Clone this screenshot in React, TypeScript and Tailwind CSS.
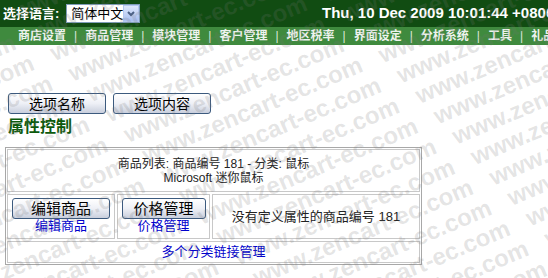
import React from "react";

const navItems = ["商店设置", "商品管理", "模块管理", "客户管理", "地区税率", "界面设定", "分析系统", "工具", "礼品券"];

// faint diagonal site watermark lying over the page
const Watermark = () => {
  const lines = Array.from({ length: 24 });
  return (
    <div className="pointer-events-none absolute inset-0 overflow-hidden" aria-hidden="true">
      <div className="absolute left-[-200px] top-[-180px] w-[1000px] rotate-[-23deg]">
        {lines.map((_, i) => (
          <div
            key={i}
            className="whitespace-nowrap text-[24px] leading-[26px] font-semibold text-[rgba(120,120,120,0.2)] font-['Liberation_Sans',sans-serif]"
            style={{ paddingLeft: (i * 9) % 270 }}
          >
            {"www.zencart-ec.com\u00a0\u00a0 ".repeat(4)}
          </div>
        ))}
      </div>
    </div>
  );
};

const GrayButton = ({ label, className }: { label: string; className: string }) => (
  <button
    className={`h-[21px] rounded-[3px] border border-[#3c5a7e] bg-gradient-to-b from-white via-[#eef0f6] to-[#c9cfdd] text-black leading-none ${className}`}
  >
    {label}
  </button>
);

export default function App() {
  return (
    <div className="relative w-[548px] h-[278px] overflow-hidden bg-white font-['Liberation_Sans','Noto_Sans_CJK_SC',sans-serif]">
      {/* header */}
      <div className="flex items-center h-[27px] bg-[#114c12] text-white whitespace-nowrap">
        <div className="flex items-center w-[322px] shrink-0 pl-[3px]">
          <span className="text-[13px] font-bold">选择语言:</span>
          <div className="ml-[7px] flex items-center h-[19px] w-[74px] bg-white border border-[#7f9db9]">
            <span className="flex-1 pl-[4px] text-[13px] text-black">简体中文</span>
            <span className="flex items-center justify-center w-[16px] h-[17px] bg-gradient-to-b from-[#dfe8fb] to-[#a9bff0] border border-[#b4c7ef]">
              <svg width="8" height="6" viewBox="0 0 8 6">
                <path d="M1 1 L4 4 L7 1" stroke="#4d6185" strokeWidth="2" fill="none" />
              </svg>
            </span>
          </div>
        </div>
        <span className="shrink-0 text-[15px] font-bold">Thu, 10 Dec 2009 10:01:44 +0800</span>
      </div>

      {/* nav */}
      <div className="flex items-center h-[18px] bg-[#3f8a3e] pl-[18px] whitespace-nowrap text-[12px] font-bold text-[#eef3ee]">
        {navItems.map((item, i) => (
          <React.Fragment key={item}>
            {i > 0 && <span className="px-[8px] font-normal text-[#dde8dd]">|</span>}
            <span className="shrink-0">{item}</span>
          </React.Fragment>
        ))}
      </div>

      {/* body */}
      <div className="pt-[48px] px-[8px]">
        <div className="flex gap-[7px]">
          <GrayButton label="选项名称" className="w-[98px] text-[14px]" />
          <GrayButton label="选项内容" className="w-[98px] text-[14px]" />
        </div>
        <h1 className="mt-[4px] text-[16px] leading-[18px] font-bold text-[#0c5a0c]">属性控制</h1>
      </div>

      <div className="ml-[5px] mt-[11px] w-[417px] border border-[#a8a8a8] p-[1px] flex flex-col gap-[2px] text-[12px] text-[#222]">
        <div className="h-[43px] border border-[#c8c8c8] flex flex-col items-center justify-center leading-[14px]">
          <span>商品列表: 商品编号 181 - 分类: 鼠标</span>
          <span>Microsoft 迷你鼠标</span>
        </div>
        <div className="flex gap-[2px] h-[45px]">
          <div className="w-[108px] border border-[#c8c8c8] flex flex-col items-center pt-[3px]">
            <GrayButton label="编辑商品" className="w-[98px] text-[15px]" />
            <a className="text-[13px] leading-[14px] text-[#0000cc]">编辑商品</a>
          </div>
          <div className="w-[93px] border border-[#c8c8c8] flex flex-col items-center pt-[3px]">
            <GrayButton label="价格管理" className="w-[84px] text-[15px]" />
            <a className="text-[13px] leading-[14px] text-[#0000cc]">价格管理</a>
          </div>
          <div className="flex-1 border border-[#c8c8c8] flex items-center justify-center text-[13px]">
            没有定义属性的商品编号 181
          </div>
        </div>
        <div className="h-[22px] border border-[#c8c8c8] flex items-center justify-center">
          <a className="text-[13px] text-[#0000cc]">多个分类链接管理</a>
        </div>
      </div>

      <Watermark />
    </div>
  );
}
